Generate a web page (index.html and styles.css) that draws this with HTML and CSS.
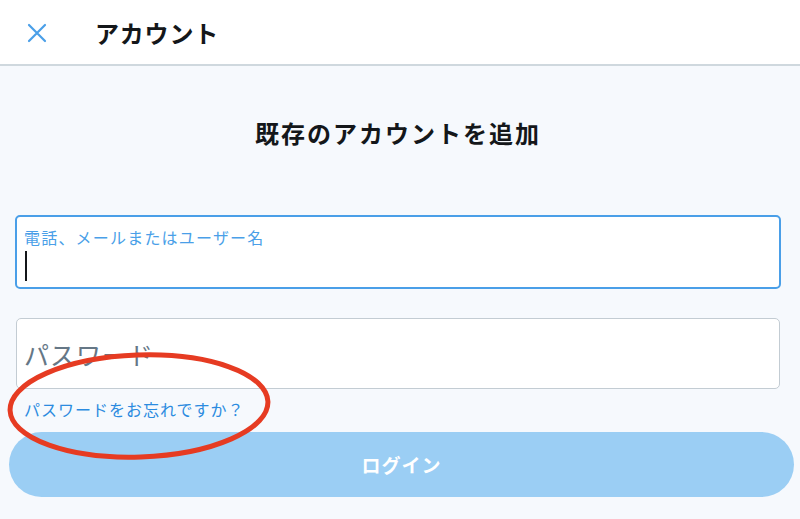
FILE: index.html
```html
<!DOCTYPE html>
<html lang="ja">
<head>
<meta charset="utf-8">
<link rel="stylesheet" href="styles.css">
</head>
<body>
<div class="page">
  <header class="topbar">
    <svg class="close" viewBox="0 0 20 20" width="20" height="20" aria-hidden="true">
      <path d="M2 2 L18 18 M18 2 L2 18" stroke="#4a9fe8" stroke-width="2.2" stroke-linecap="round" fill="none"/>
    </svg>
    <h1 class="title">アカウント</h1>
  </header>
  <main class="content">
    <h2 class="heading">既存のアカウントを追加</h2>
    <div class="field field-active">
      <span class="label">電話、メールまたはユーザー名</span>
      <span class="caret"></span>
    </div>
    <div class="field field-idle">
      <span class="placeholder">パスワード</span>
    </div>
    <div class="forgot-wrap">
      <a class="forgot">パスワードをお忘れですか？</a>
      <svg class="circle" viewBox="0 0 270 112" width="270" height="112" aria-hidden="true">
        <ellipse cx="134" cy="56" rx="129" ry="51" transform="rotate(-2 134 56)" fill="none" stroke="#e63b22" stroke-width="5"/>
      </svg>
    </div>
    <button class="login">ログイン</button>
  </main>
</div>
</body>
</html>
```

FILE: styles.css
```css
* { box-sizing: border-box; }
html, body { margin: 0; padding: 0; }
body {
  width: 800px;
  height: 519px;
  overflow: hidden;
  background: #f6f9fd;
  font-family: "Noto Sans CJK JP", "Noto Sans", sans-serif;
}
.page { display: flex; flex-direction: column; height: 519px; }
.topbar {
  height: 66px;
  background: #ffffff;
  border-bottom: 2px solid #cfd8de;
  display: flex;
  align-items: center;
  padding-left: 27px;
  flex-shrink: 0;
}
.close { display: block; margin-right: 48px; margin-top: 2px; }
.title {
  margin: 0;
  font-size: 24px;
  font-weight: 700;
  color: #14171a;
  letter-spacing: 0.8px;
}
.content {
  display: flex;
  flex-direction: column;
  padding: 0 19px 0 15px;
  position: relative;
}
.heading {
  margin: 44px 0 0;
  text-align: center;
  font-size: 24px;
  font-weight: 700;
  color: #14171a;
  line-height: 46px;
  letter-spacing: 2px;
}
.field {
  background: #ffffff;
  border-radius: 5px;
  display: flex;
  flex-direction: column;
}
.field-active {
  margin-top: 59px;
  height: 74px;
  border: 2px solid #4a9fe8;
  padding: 9px 7px 0;
}
.label {
  font-size: 16px;
  line-height: 22px;
  color: #4a9fe8;
  letter-spacing: 1.2px;
}
.caret {
  display: block;
  width: 2px;
  height: 30px;
  background: #14171a;
  margin-top: 3px;
  margin-left: 1px;
}
.field-idle {
  margin-top: 29px;
  height: 71px;
  border: 1px solid #c3ccd3;
  margin-right: 1px;
  margin-left: 1px;
  justify-content: center;
  padding-left: 7px;
}
.placeholder {
  font-size: 25px;
  color: #657786;
  letter-spacing: 1px;
  line-height: 30px;
}
.forgot-wrap {
  position: relative;
  height: 40px;
  display: flex;
  align-items: center;
  padding-left: 9px;
}
.forgot {
  font-size: 16px;
  color: #2b8be0;
  letter-spacing: 1px;
}
.circle {
  position: absolute;
  left: -10px;
  top: -39px;
  z-index: 2;
}
.login {
  margin: 3px -13px 0 -6px;
  height: 65px;
  border: none;
  border-radius: 33px;
  background: #9bcef4;
  color: #ffffff;
  font-family: "Noto Sans CJK JP", "Noto Sans", sans-serif;
  font-size: 19px;
  font-weight: 700;
  letter-spacing: 1px;
}
```
